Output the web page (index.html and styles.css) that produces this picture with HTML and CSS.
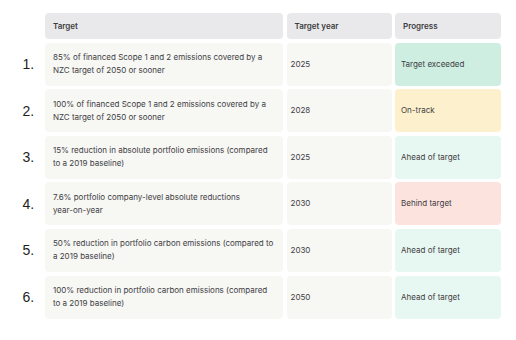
FILE: index.html
```html
<!DOCTYPE html>
<html>
<head>
<meta charset="utf-8">
<link rel="stylesheet" href="styles.css">
</head>
<body>
<div class="table">
  <div class="num"></div>
  <div class="cell head c1">Target</div>
  <div class="cell head c2">Target year</div>
  <div class="cell head c3">Progress</div>

  <div class="num">1.</div>
  <div class="cell body c1">85% of financed Scope 1 and 2 emissions covered by a<br>NZC target of 2050 or sooner</div>
  <div class="cell body c2">2025</div>
  <div class="cell status exceeded">Target exceeded</div>

  <div class="num">2.</div>
  <div class="cell body c1">100% of financed Scope 1 and 2 emissions covered by a<br>NZC target of 2050 or sooner</div>
  <div class="cell body c2">2028</div>
  <div class="cell status ontrack">On-track</div>

  <div class="num">3.</div>
  <div class="cell body c1">15% reduction in absolute portfolio emissions (compared<br>to a 2019 baseline)</div>
  <div class="cell body c2">2025</div>
  <div class="cell status ahead">Ahead of target</div>

  <div class="num">4.</div>
  <div class="cell body c1">7.6% portfolio company-level absolute reductions<br>year-on-year</div>
  <div class="cell body c2">2030</div>
  <div class="cell status behind">Behind target</div>

  <div class="num">5.</div>
  <div class="cell body c1">50% reduction in portfolio carbon emissions (compared to<br>a 2019 baseline)</div>
  <div class="cell body c2">2030</div>
  <div class="cell status ahead">Ahead of target</div>

  <div class="num">6.</div>
  <div class="cell body c1">100% reduction in portfolio carbon emissions (compared<br>to a 2019 baseline)</div>
  <div class="cell body c2">2050</div>
  <div class="cell status ahead">Ahead of target</div>
</div>
</body>
</html>
```

FILE: styles.css
```css
html, body {
  margin: 0;
  padding: 0;
  background: #ffffff;
}
body {
  width: 516px;
  height: 340px;
  overflow: hidden;
}
.table {
  display: grid;
  grid-template-columns: 22px 238px 105px 106px;
  grid-template-rows: 26px repeat(6, 43px);
  column-gap: 3.5px;
  row-gap: 3.6px;
  padding: 13px 0 0 19.5px;
  font-family: Inter, "Liberation Sans", sans-serif;
}
.num {
  font-family: "Liberation Sans", Arial, sans-serif;
  font-size: 14px;
  color: #1e1e1e;
  display: flex;
  align-items: center;
  padding-left: 3px;
}
.cell {
  border-radius: 4px;
  display: flex;
  align-items: center;
  font-size: 8px;
  line-height: 13px;
  color: #404043;
  padding: 0 8px;
  white-space: nowrap;
}
.head {
  background: #e9e9eb;
  font-weight: 600;
  color: #3c3c40;
}
.body {
  background: #f7f7f4;
}
.body.c2 {
  padding-left: 4px;
}
.status {
  padding-left: 6px;
}
.exceeded { background: #cdeee1; }
.ontrack { background: #fdf0cc; }
.ahead { background: #e7f7f1; }
.behind { background: #fde3de; }
```
